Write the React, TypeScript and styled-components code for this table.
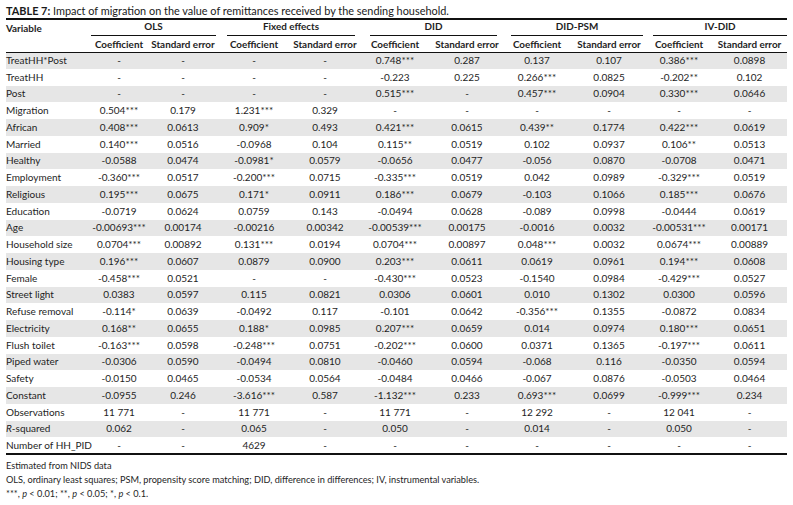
import styled, { createGlobalStyle } from "styled-components";

const GlobalStyle = createGlobalStyle`
  html, body {
    margin: 0;
    padding: 0;
    background: #ffffff;
  }
  body {
    font-family: Lato, "Liberation Sans", sans-serif;
    color: #1e1e1e;
  }
`;

const groups = ["OLS", "Fixed effects", "DID", "DID-PSM", "IV-DID"];
const colWidths = [82, 62, 66, 76, 66, 74, 70, 70, 74, 66, 75];

type Row = { label: React.ReactNode; values: string[] };

const rows: Row[] = [
  { label: "TreatHH*Post", values: ["-", "-", "-", "-", "0.748***", "0.287", "0.137", "0.107", "0.386***", "0.0898"] },
  { label: "TreatHH", values: ["-", "-", "-", "-", "-0.223", "0.225", "0.266***", "0.0825", "-0.202**", "0.102"] },
  { label: "Post", values: ["-", "-", "-", "-", "0.515***", "-", "0.457***", "0.0904", "0.330***", "0.0646"] },
  { label: "Migration", values: ["0.504***", "0.179", "1.231***", "0.329", "-", "-", "-", "-", "-", "-"] },
  { label: "African", values: ["0.408***", "0.0613", "0.909*", "0.493", "0.421***", "0.0615", "0.439**", "0.1774", "0.422***", "0.0619"] },
  { label: "Married", values: ["0.140***", "0.0516", "-0.0968", "0.104", "0.115**", "0.0519", "0.102", "0.0937", "0.106**", "0.0513"] },
  { label: "Healthy", values: ["-0.0588", "0.0474", "-0.0981*", "0.0579", "-0.0656", "0.0477", "-0.056", "0.0870", "-0.0708", "0.0471"] },
  { label: "Employment", values: ["-0.360***", "0.0517", "-0.200***", "0.0715", "-0.335***", "0.0519", "0.042", "0.0989", "-0.329***", "0.0519"] },
  { label: "Religious", values: ["0.195***", "0.0675", "0.171*", "0.0911", "0.186***", "0.0679", "-0.103", "0.1066", "0.185***", "0.0676"] },
  { label: "Education", values: ["-0.0719", "0.0624", "0.0759", "0.143", "-0.0494", "0.0628", "-0.089", "0.0998", "-0.0444", "0.0619"] },
  { label: "Age", values: ["-0.00693***", "0.00174", "-0.00216", "0.00342", "-0.00539***", "0.00175", "-0.0016", "0.0032", "-0.00531***", "0.00171"] },
  { label: "Household size", values: ["0.0704***", "0.00892", "0.131***", "0.0194", "0.0704***", "0.00897", "0.048***", "0.0032", "0.0674***", "0.00889"] },
  { label: "Housing type", values: ["0.196***", "0.0607", "0.0879", "0.0900", "0.203***", "0.0611", "0.0619", "0.0961", "0.194***", "0.0608"] },
  { label: "Female", values: ["-0.458***", "0.0521", "-", "-", "-0.430***", "0.0523", "-0.1540", "0.0984", "-0.429***", "0.0527"] },
  { label: "Street light", values: ["0.0383", "0.0597", "0.115", "0.0821", "0.0306", "0.0601", "0.010", "0.1302", "0.0300", "0.0596"] },
  { label: "Refuse removal", values: ["-0.114*", "0.0639", "-0.0492", "0.117", "-0.101", "0.0642", "-0.356***", "0.1355", "-0.0872", "0.0834"] },
  { label: "Electricity", values: ["0.168**", "0.0655", "0.188*", "0.0985", "0.207***", "0.0659", "0.014", "0.0974", "0.180***", "0.0651"] },
  { label: "Flush toilet", values: ["-0.163***", "0.0598", "-0.248***", "0.0751", "-0.202***", "0.0600", "0.0371", "0.1365", "-0.197***", "0.0611"] },
  { label: "Piped water", values: ["-0.0306", "0.0590", "-0.0494", "0.0810", "-0.0460", "0.0594", "-0.068", "0.116", "-0.0350", "0.0594"] },
  { label: "Safety", values: ["-0.0150", "0.0465", "-0.0534", "0.0564", "-0.0484", "0.0466", "-0.067", "0.0876", "-0.0503", "0.0464"] },
  { label: "Constant", values: ["-0.0955", "0.246", "-3.616***", "0.587", "-1.132***", "0.233", "0.693***", "0.0699", "-0.999***", "0.234"] },
  { label: "Observations", values: ["11 771", "-", "11 771", "-", "11 771", "-", "12 292", "-", "12 041", "-"] },
  { label: <><i>R</i>-squared</>, values: ["0.062", "-", "0.065", "-", "0.050", "-", "0.014", "-", "0.050", "-"] },
  { label: "Number of HH_PID", values: ["-", "-", "4629", "-", "-", "-", "-", "-", "-", "-"] },
];

const Page = styled.div`
  width: 781px;
  padding: 0 0 0 6px;
`;

const Caption = styled.div`
  height: 18px;
  font-size: 10.9px;
  line-height: 12px;
  padding-top: 5px;
  box-sizing: border-box;
  white-space: nowrap;
  color: #1a1a1a;
  b {
    font-weight: 700;
  }
`;

const Table = styled.table`
  width: 781px;
  border-collapse: collapse;
  table-layout: fixed;
  border-top: 2px solid #111;
  border-bottom: 2px solid #111;
`;

const Col = styled.col<{ $w: number }>`
  width: ${(p) => p.$w}px;
`;

const HeadRow = styled.tr<{ $rule?: boolean }>`
  height: ${(p) => (p.$rule ? 16 : 17)}px;
  border-bottom: ${(p) => (p.$rule ? "1px solid #111" : "none")};
`;

const HeadCell = styled.th<{ $left?: boolean }>`
  padding: 0;
  font-size: 9.9px;
  font-weight: 700;
  text-align: ${(p) => (p.$left ? "left" : "center")};
  white-space: nowrap;
  vertical-align: middle;
`;

const GroupCell = styled.th`
  padding: 0;
  font-size: 9.9px;
  font-weight: 700;
  vertical-align: bottom;
`;

const GroupLabel = styled.div<{ $inL: number; $inR: number }>`
  margin: 0 ${(p) => p.$inR}px 0 ${(p) => p.$inL}px;
  padding-bottom: 3px;
  border-bottom: 1px solid #111;
  text-align: center;
  line-height: 11px;
`;

const BodyRow = styled.tr<{ $shade: boolean }>`
  height: 16.75px;
  background: ${(p) => (p.$shade ? "#e6e6e6" : "#ffffff")};
`;

const Cell = styled.td<{ $left?: boolean }>`
  padding: 0;
  font-size: 10px;
  line-height: 11px;
  text-align: ${(p) => (p.$left ? "left" : "center")};
  white-space: nowrap;
  vertical-align: middle;
`;

const Notes = styled.div`
  padding-top: 4px;
  font-size: 9.2px;
  line-height: 14px;
  color: #1e1e1e;
  white-space: nowrap;
`;

const groupInsets: [number, number][] = [
  [3, 0],
  [11, 3],
  [12, 5],
  [9, 3],
  [7, 0],
];

export default function App() {
  return (
    <Page>
      <GlobalStyle />
      <Caption>
        <b>TABLE 7:</b> Impact of migration on the value of remittances received by the sending household.
      </Caption>
      <Table>
        <colgroup>
          {colWidths.map((w, i) => (
            <Col key={i} $w={w} />
          ))}
        </colgroup>
        <thead>
          <HeadRow>
            <HeadCell $left>Variable</HeadCell>
            {groups.map((g, i) => (
              <GroupCell key={g} colSpan={2}>
                <GroupLabel $inL={groupInsets[i][0]} $inR={groupInsets[i][1]}>
                  {g}
                </GroupLabel>
              </GroupCell>
            ))}
          </HeadRow>
          <HeadRow $rule>
            <HeadCell />
            {groups.map((g) => (
              <>
                <HeadCell key={g + "c"}>Coefficient</HeadCell>
                <HeadCell key={g + "s"}>Standard error</HeadCell>
              </>
            ))}
          </HeadRow>
        </thead>
        <tbody>
          {rows.map((r, i) => (
            <BodyRow key={i} $shade={i % 2 === 0}>
              <Cell $left>{r.label}</Cell>
              {r.values.map((v, j) => (
                <Cell key={j}>{v}</Cell>
              ))}
            </BodyRow>
          ))}
        </tbody>
      </Table>
      <Notes>
        <div>Estimated from NIDS data</div>
        <div>
          OLS, ordinary least squares; PSM, propensity score matching; DID, difference in differences; IV, instrumental
          variables.
        </div>
        <div>
          ***, <i>p</i> &lt; 0.01; **, <i>p</i> &lt; 0.05; *, <i>p</i> &lt; 0.1.
        </div>
      </Notes>
    </Page>
  );
}
